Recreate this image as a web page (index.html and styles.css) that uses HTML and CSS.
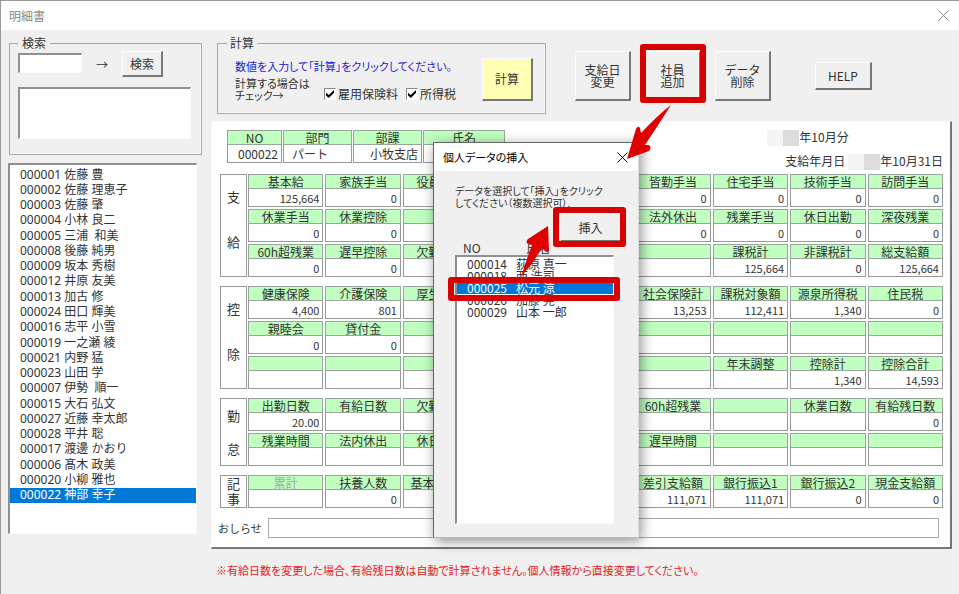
FILE: index.html
```html
<!DOCTYPE html>
<html lang="ja">
<head>
<meta charset="utf-8">
<title>明細書</title>
<link rel="stylesheet" href="styles.css">
</head>
<body>
<div class="window">
<header class="titlebar">
  <h1>明細書</h1>
  <button class="close" aria-label="閉じる"><svg width="11" height="11" viewBox="0 0 11 11"><path d="M.5.5l10 10M10.5.5l-10 10" fill="none" stroke="currentColor"/></svg></button>
</header>
<main class="main">
  <aside class="side">
    <fieldset class="group search">
      <legend>検索</legend>
      <div class="search-row">
        <input class="sunken search-box" aria-label="検索語">
        <span class="to">→</span>
        <button class="btn find">検索</button>
      </div>
      <textarea class="sunken results" aria-label="検索結果"></textarea>
    </fieldset>
    <ul class="sunken staff" role="listbox" aria-label="社員一覧">
      <li role="option">000001 佐藤 豊</li>
      <li role="option">000002 佐藤 理恵子</li>
      <li role="option">000003 佐藤 肇</li>
      <li role="option">000004 小林 良二</li>
      <li role="option">000005 三浦&nbsp; 和美</li>
      <li role="option">000008 後藤 純男</li>
      <li role="option">000009 坂本 秀樹</li>
      <li role="option">000012 井原 友美</li>
      <li role="option">000013 加古 修</li>
      <li role="option">000024 田口 輝美</li>
      <li role="option">000016 志平 小雪</li>
      <li role="option">000019 一之瀬 綾</li>
      <li role="option">000021 内野 猛</li>
      <li role="option">000023 山田 学</li>
      <li role="option">000007 伊勢&nbsp; 順一</li>
      <li role="option">000015 大石 弘文</li>
      <li role="option">000027 近藤 幸太郎</li>
      <li role="option">000028 平井 聡</li>
      <li role="option">000017 渡邊 かおり</li>
      <li role="option">000006 髙木 政美</li>
      <li role="option">000020 小柳 雅也</li>
      <li role="option" aria-selected="true">000022 神部 幸子</li>
    </ul>
  </aside>

  <section class="content">
    <div class="toolbar">
      <fieldset class="group calc">
        <legend>計算</legend>
        <div class="calc-body">
          <p class="hint">数値を入力して「計算」をクリックしてください。</p>
          <div class="checks">
            <span class="check-note">計算する場合は<br>チェック→</span>
            <label><input type="checkbox" checked>雇用保険料</label>
            <label><input type="checkbox" checked>所得税</label>
          </div>
        </div>
        <button class="btn run">計算</button>
      </fieldset>
      <div class="actions">
        <button class="btn tall">支給日<br>変更</button>
        <button class="btn tall">社員<br>追加</button>
        <button class="btn tall">データ<br>削除</button>
      </div>
      <button class="btn help">HELP</button>
    </div>

    <div class="panel">
      <div class="head">
        <div class="ident">
          <label class="field"><span>NO</span><input value="000022"></label>
          <label class="field left"><span>部門</span><input value="パート"></label>
          <label class="field"><span>部課</span><input value="小牧支店"></label>
          <label class="field"><span>氏名</span><input></label>
        </div>
        <div class="dates">
          <p class="month"><span class="mask"></span>年10月分</p>
          <p>支給年月日<span class="mask gap"></span>年10月31日</p>
        </div>
      </div>

      <div class="block">
        <div class="caption tall-caption"><span>支</span><span>給</span></div>
        <div class="fields">
          <label class="field"><span>基本給</span><input value="125,664"></label>
          <label class="field"><span>家族手当</span><input value="0"></label>
          <label class="field"><span>役員手当</span><input></label>
          <label class="field"><span></span><input></label>
          <label class="field"><span></span><input></label>
          <label class="field"><span>皆勤手当</span><input value="0"></label>
          <label class="field"><span>住宅手当</span><input value="0"></label>
          <label class="field"><span>技術手当</span><input value="0"></label>
          <label class="field"><span>訪問手当</span><input value="0"></label>

          <label class="field"><span>休業手当</span><input value="0"></label>
          <label class="field"><span>休業控除</span><input value="0"></label>
          <label class="field"><span></span><input></label>
          <label class="field"><span></span><input></label>
          <label class="field"><span></span><input></label>
          <label class="field"><span>法外休出</span><input value="0"></label>
          <label class="field"><span>残業手当</span><input value="0"></label>
          <label class="field"><span>休日出勤</span><input value="0"></label>
          <label class="field"><span>深夜残業</span><input value="0"></label>

          <label class="field"><span>60h超残業</span><input value="0"></label>
          <label class="field"><span>遅早控除</span><input value="0"></label>
          <label class="field"><span>欠勤控除</span><input></label>
          <label class="field"><span></span><input></label>
          <label class="field"><span></span><input></label>
          <label class="field"><span></span><input></label>
          <label class="field"><span>課税計</span><input value="125,664"></label>
          <label class="field"><span>非課税計</span><input value="0"></label>
          <label class="field"><span>総支給額</span><input value="125,664"></label>
        </div>
      </div>

      <div class="block">
        <div class="caption tall-caption"><span>控</span><span>除</span></div>
        <div class="fields">
          <label class="field"><span>健康保険</span><input value="4,400"></label>
          <label class="field"><span>介護保険</span><input value="801"></label>
          <label class="field"><span>厚生年金</span><input></label>
          <label class="field"><span></span><input></label>
          <label class="field"><span></span><input></label>
          <label class="field"><span>社会保険計</span><input value="13,253"></label>
          <label class="field"><span>課税対象額</span><input value="112,411"></label>
          <label class="field"><span>源泉所得税</span><input value="1,340"></label>
          <label class="field"><span>住民税</span><input value="0"></label>

          <label class="field"><span>親睦会</span><input value="0"></label>
          <label class="field"><span>貸付金</span><input value="0"></label>
          <label class="field"><span></span><input></label>
          <label class="field"><span></span><input></label>
          <label class="field"><span></span><input></label>
          <label class="field"><span></span><input></label>
          <label class="field"><span></span><input></label>
          <label class="field"><span></span><input></label>
          <label class="field"><span></span><input></label>

          <label class="field"><span></span><input></label>
          <label class="field"><span></span><input></label>
          <label class="field"><span></span><input></label>
          <label class="field"><span></span><input></label>
          <label class="field"><span></span><input></label>
          <label class="field"><span></span><input></label>
          <label class="field"><span>年末調整</span><input></label>
          <label class="field"><span>控除計</span><input value="1,340"></label>
          <label class="field"><span>控除合計</span><input value="14,593"></label>
        </div>
      </div>

      <div class="block">
        <div class="caption"><span>勤</span><span>怠</span></div>
        <div class="fields">
          <label class="field"><span>出勤日数</span><input value="20.00"></label>
          <label class="field"><span>有給日数</span><input></label>
          <label class="field"><span>欠勤日数</span><input></label>
          <label class="field"><span></span><input></label>
          <label class="field"><span></span><input></label>
          <label class="field"><span>60h超残業</span><input></label>
          <label class="field"><span></span><input></label>
          <label class="field"><span>休業日数</span><input></label>
          <label class="field"><span>有給残日数</span><input value="0"></label>

          <label class="field"><span>残業時間</span><input></label>
          <label class="field"><span>法内休出</span><input></label>
          <label class="field"><span>休日出勤</span><input></label>
          <label class="field"><span></span><input></label>
          <label class="field"><span></span><input></label>
          <label class="field"><span>遅早時間</span><input></label>
          <label class="field"><span></span><input></label>
          <label class="field"><span></span><input></label>
          <label class="field"><span></span><input></label>
        </div>
      </div>

      <div class="block">
        <div class="caption"><span>記</span><span>事</span></div>
        <div class="fields">
          <label class="field off"><span>累計</span><input></label>
          <label class="field"><span>扶養人数</span><input value="0"></label>
          <label class="field"><span>基本支給額</span><input></label>
          <label class="field"><span></span><input></label>
          <label class="field"><span></span><input></label>
          <label class="field"><span>差引支給額</span><input value="111,071"></label>
          <label class="field"><span>銀行振込1</span><input value="111,071"></label>
          <label class="field"><span>銀行振込2</span><input value="0"></label>
          <label class="field"><span>現金支給額</span><input value="0"></label>
        </div>
      </div>

      <label class="memo"><span>おしらせ</span><input></label>
    </div>
    <p class="warning">※有給日数を変更した場合、有給残日数は自動で計算されません。個人情報から直接変更してください。</p>
  </section>
</main>

<div class="dialog" role="dialog" aria-labelledby="dialog-title">
  <header class="dialog-bar">
    <h2 id="dialog-title">個人データの挿入</h2>
    <button class="close" aria-label="閉じる"><svg width="11" height="11" viewBox="0 0 11 11"><path d="M.5.5l10 10M10.5.5l-10 10" fill="none" stroke="currentColor"/></svg></button>
  </header>
  <div class="dialog-body">
    <p class="dialog-text">データを選択して「挿入」をクリック<br>してください（複数選択可）.</p>
    <button class="btn insert">挿入</button>
    <div class="pick-head"><span>NO</span><span>氏名</span></div>
    <ul class="sunken picks" role="listbox" aria-label="個人データ" aria-multiselectable="true">
      <li role="option"><span>000014</span><span>荻原 真一</span></li>
      <li role="option"><span>000018</span><span>西 浩司</span></li>
      <li role="option" aria-selected="true"><span>000025</span><span>松元 涼</span></li>
      <li role="option"><span>000026</span><span>加藤 晃</span></li>
      <li role="option"><span>000029</span><span>山本 一郎</span></li>
    </ul>
  </div>
</div>

<svg class="marks" width="320" height="270" viewBox="400 40 320 270" aria-hidden="true">
  <g fill="none" stroke="#d90000" stroke-width="6" stroke-linejoin="round">
    <rect x="643" y="47" width="60" height="53"/>
    <rect x="556" y="210" width="67" height="34"/>
    <rect x="451" y="280" width="166" height="18"/>
  </g>
  <g fill="#e00000">
    <path d="M671 105 Q659 114 641 133 L640 128 Q638 125 636 129 L627 159 L649 151 Q652 148 649 145 L645 145 Q655 130 671 105Z"/>
    <path d="M521 277 Q527 258 532 245 L528 244 Q525 242 528 239 L548 226 L549 250 Q547 254 544 250 L542 248 Q534 262 521 277Z"/>
  </g>
</svg>
</div>
</body>
</html>
```
FILE: styles.css
```css
* { box-sizing: border-box; }

body {
  margin: 0;
  background: #f0f0f0;
  color: #333;
  font: 12px/14px "Noto Sans CJK JP", sans-serif;
}

button, input, textarea { font: inherit; color: inherit; }
p, h1, h2, ul { margin: 0; padding: 0; }
ul { list-style: none; }

.window {
  position: relative;
  min-height: 100vh;
  border-top: 1px solid #999;
  border-left: 1px solid #999;
}

.titlebar, .dialog-bar {
  display: flex;
  align-items: center;
  justify-content: space-between;
  background: #fff;
}
.titlebar { height: 29px; padding: 0 10px 0 8px; color: #888; }
.titlebar h1, .dialog-bar h2 { font-size: 12px; font-weight: 400; }
.close { display: flex; padding: 0; border: 0; background: none; }

.main {
  display: grid;
  grid-template-columns: 194px minmax(0, 1fr);
  gap: 9px;
  padding: 6px 7px 0 7px;
}

.side { display: flex; flex-direction: column; padding-bottom: 43px; }

.group {
  min-width: 0;
  margin: 0;
  border: 1px solid #a8a8a8;
  box-shadow: inset -1px -1px #fafafa;
}
.group legend { padding: 0 4px; }

.sunken {
  border: 1px solid #fafafa;
  border-top: 2px solid #909090;
  border-left: 2px solid #909090;
  background: #fff;
}

.btn {
  padding: 0;
  border: 1px solid #fafafa;
  border-right: 2px solid #777;
  border-bottom: 2px solid #777;
  background: #f0f0f0;
  line-height: 12px;
}

.search { margin-left: 1px; height: 119px; padding: 1px 8px 0; }
.search-row { display: flex; align-items: flex-start; margin-bottom: 10px; }
.search-box { width: 64px; height: 20px; margin-top: 2px; }
.to { width: 40px; padding-top: 7px; text-align: center; }
.find { width: 41px; height: 26px; }
.results { display: block; width: 173px; height: 52px; resize: none; }

.staff {
  display: flex;
  flex: 1;
  flex-direction: column;
  width: 189px;
  margin-top: 8px;
  padding: 2px 0 30px;
  font-family: "Noto Sans", "Noto Sans CJK JP", sans-serif;
}
.staff li { display: flex; flex: 1; align-items: center; padding-left: 10px; }
[aria-selected="true"] { background: #0078d7; color: #fff; }

.toolbar { display: flex; align-items: flex-start; height: 85px; padding-left: 6px; }
.calc { display: flex; justify-content: space-between; width: 329px; height: 78px; padding: 1px 12px 0 17px; }
.calc legend { padding: 0 3px; margin-left: -8px; }
.hint {
  margin-top: 8px;
  color: #2222dd;
  font-size: 11px;
  font-feature-settings: "palt";
  white-space: nowrap;
}
.checks { display: flex; align-items: flex-end; margin-top: 4px; white-space: nowrap; }
.check-note { width: 89px; font-size: 11px; line-height: 12px; font-feature-settings: "palt"; }
.checks label { display: flex; align-items: center; gap: 2px; margin-right: 8px; }
.checks input {
  display: grid;
  width: 12px;
  height: 12px;
  margin: 0;
  border: 1px solid #fafafa;
  border-top-color: #888;
  border-left-color: #888;
  background: #fff;
  appearance: none;
}
.checks input:checked::before {
  content: "";
  width: 8px;
  height: 8px;
  margin: 1px;
  background: #000;
  clip-path: polygon(0 35%, 35% 62%, 100% 0, 100% 35%, 35% 100%, 0 70%);
}
.run { width: 51px; height: 43px; margin-top: 7px; background: #ffffb4; }
.actions { display: flex; gap: 14px; margin: 15px 0 0 29px; }
.tall { width: 56px; height: 50px; }
.help { width: 57px; height: 28px; margin: 26px 0 0 44px; }

.panel {
  padding: 8px 7px 9px 8px;
  border: 1px solid #fafafa;
  border-right: 2px solid #777;
  border-bottom: 2px solid #777;
  background: #fff;
}
.head { display: flex; align-items: flex-start; justify-content: space-between; margin-bottom: 4px; }
.ident { display: grid; grid-template-columns: 55px 69px 69px 82px; gap: 1px; margin-left: 7px; }
.dates { display: flex; flex-direction: column; gap: 8px; }
.dates p { display: flex; }
.dates .month { margin-left: -18px; }
.mask { width: 32px; height: 16px; background: linear-gradient(90deg, #f4f4f4 50%, #dcdcdc 50%); }
.gap { margin-left: 3px; }

.block { display: grid; grid-template-columns: 27px minmax(0, 1fr); gap: 1px; margin-bottom: 9px; }
.caption {
  display: flex;
  flex-direction: column;
  align-items: center;
  justify-content: space-around;
  border: 1px solid #999;
  font-size: 13px;
}
.tall-caption { padding-bottom: 12px; }
.fields { display: grid; grid-template-columns: repeat(9, minmax(0, 1fr)); gap: 2px; }
.field { display: flex; flex-direction: column; min-width: 0; }
.field span {
  height: 15px;
  border: 1px solid #98a898;
  background: #c0ffc0;
  line-height: 13px;
  text-align: center;
  white-space: nowrap;
}
.field input {
  width: 100%;
  height: 18px;
  padding: 0 3px;
  border: 1px solid #999;
  border-top: 0;
  background: #fff;
  font-size: 11px;
  text-align: right;
}
.ident input { font-size: 12px; }
.ident .left input { padding-left: 8px; text-align: left; }
.off span { color: #a0a8a0; }

.memo { display: flex; align-items: center; margin: 10px 4px 0 -2px; }
.memo span { width: 50px; font-size: 11px; }
.memo input { flex: 1; height: 20px; border: 1px solid #aaa; background: #fff; }

.warning {
  margin: 14px 0 0 5px;
  color: #e82222;
  font-size: 11px;
  font-feature-settings: "palt";
}

.dialog {
  position: absolute;
  top: 141px;
  left: 432px;
  width: 206px;
  border: 1px solid #666;
  border-right-color: #ddd;
  border-bottom-color: #bbb;
  background: #f0f0f0;
  box-shadow: 2px 3px 12px rgba(0, 0, 0, 0.45);
}
.dialog-bar { height: 28px; padding: 0 10px 0 9px; color: #000; }
.dialog-bar h2 { font-feature-settings: "palt"; font-size: 11px; }
.dialog-body { display: flex; flex-direction: column; padding: 14px 24px 13px 21px; }
.dialog-text {
  font-size: 10px;
  line-height: 12px;
  font-feature-settings: "palt";
  white-space: nowrap;
}
.insert { align-self: flex-end; width: 62px; height: 28px; margin: 5px -8px 0 0; }
.pick-head { display: grid; grid-template-columns: 63px 1fr; padding-left: 8px; line-height: 12px; }
.picks { height: 269px; margin-top: 1px; padding-top: 1px; }
.picks li { display: grid; grid-template-columns: 49px 1fr; padding-left: 10px; line-height: 12px; }

.marks { position: absolute; top: 39px; left: 399px; pointer-events: none; }
```
